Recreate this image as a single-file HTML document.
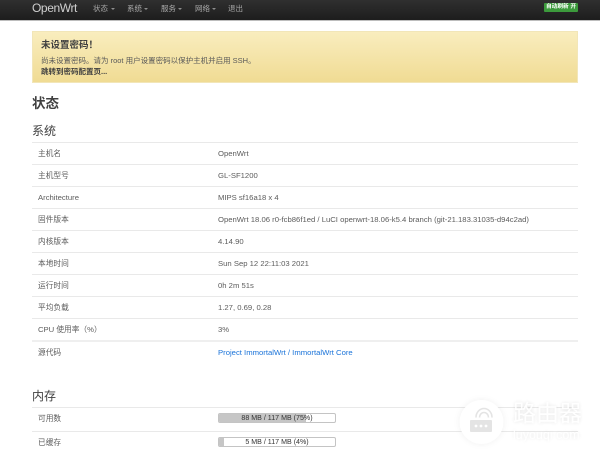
<!DOCTYPE html>
<html lang="zh-CN">
<head>
<meta charset="utf-8">
<title>OpenWrt 状态</title>
<style>
html,body{margin:0;padding:0;width:600px;height:462px;overflow:hidden;background:#fff}
body{font-family:"Liberation Sans","Noto Sans CJK SC",sans-serif;color:#404040;position:relative}
.a{position:absolute;white-space:nowrap}
#wrap{position:absolute;left:0;top:0;width:600px;height:462px;overflow:hidden;filter:blur(.35px)}
#bar{left:0;top:0;width:600px;height:20px;background:linear-gradient(#2f2f2f,#1d1d1d);border-bottom:1px solid #bdbdbd}
.nav{top:0;height:20px;line-height:17px;font-size:7.5px;color:#a9a9a9}
.car{position:absolute;top:7.5px;width:0;height:0;border-left:2.2px solid transparent;border-right:2.2px solid transparent;border-top:2.4px solid #8d8d8d}
#alert{left:32px;top:31px;width:544px;height:50px;background:linear-gradient(#f9edbe,#f0db93);border:1px solid #f2e6b8}
.line{left:32px;width:546px;height:1px;background:#e9e9e9}
.k,.v{font-size:7.7px;line-height:12px;height:12px;color:#5c5c5c}
.k{left:38px}.v{left:218px}
.pb{position:absolute;left:218px;width:116px;height:8px;border:1px solid #c4c4c4;border-radius:2px;background:#fff;overflow:hidden}
.pf{position:absolute;left:0;top:0;height:100%;background:#c6c6c6}
.pt{position:absolute;left:0;top:0;width:100%;text-align:center;font-size:7.1px;line-height:9px;color:#333}
.wm{color:#fff;opacity:.95;text-shadow:0 0 4px rgba(0,0,0,.13)}
</style>
</head>
<body>
<div id="wrap">
<div class="a" id="bar"></div>
<div class="a" style="left:32px;top:0;font-size:12px;line-height:16px;color:#cfcfcf;letter-spacing:-.4px">OpenWrt</div>

<div class="a nav" style="left:93px">状态</div><i class="car" style="left:111px"></i>
<div class="a nav" style="left:127px">系统</div><i class="car" style="left:144px"></i>
<div class="a nav" style="left:161px">服务</div><i class="car" style="left:178px"></i>
<div class="a nav" style="left:195px">网络</div><i class="car" style="left:212px"></i>
<div class="a nav" style="left:228px">退出</div>

<div class="a" style="left:544px;top:3px;width:34px;height:9px;background:#3c9a3c;border-radius:1px;color:#fff;font-size:5.7px;line-height:9px;text-align:center;font-weight:bold">自动刷新 开</div>

<div class="a" id="alert"></div>
<div class="a" style="left:41px;top:39px;font-size:9.5px;line-height:14px;font-weight:bold;color:#404040">未设置密码！</div>
<div class="a" style="left:41px;top:55px;font-size:7.5px;line-height:12px;color:#595959">尚未设置密码。请为 root 用户设置密码以保护主机并启用 SSH。</div>
<div class="a" style="left:41px;top:66px;font-size:7.5px;line-height:12px;font-weight:bold;color:#404040">跳转到密码配置页...</div>

<div class="a" style="left:32px;top:94px;font-size:13.5px;line-height:19px;font-weight:bold;color:#404040">状态</div>
<div class="a" style="left:32px;top:122px;font-size:12px;line-height:18px;color:#404040">系统</div>

<div class="a line" style="top:142px"></div>
<div class="a line" style="top:164px"></div>
<div class="a line" style="top:186px"></div>
<div class="a line" style="top:208px"></div>
<div class="a line" style="top:230px"></div>
<div class="a line" style="top:252px"></div>
<div class="a line" style="top:274px"></div>
<div class="a line" style="top:296px"></div>
<div class="a line" style="top:318px"></div>
<div class="a line" style="top:340px;height:2px;background:#efefef"></div>

<div class="a k" style="top:148px">主机名</div><div class="a v" style="top:148px">OpenWrt</div>
<div class="a k" style="top:170px">主机型号</div><div class="a v" style="top:170px">GL-SF1200</div>
<div class="a k" style="top:192px">Architecture</div><div class="a v" style="top:192px">MIPS sf16a18 x 4</div>
<div class="a k" style="top:214px">固件版本</div><div class="a v" style="top:214px">OpenWrt 18.06 r0-fcb86f1ed / LuCI openwrt-18.06-k5.4 branch (git-21.183.31035-d94c2ad)</div>
<div class="a k" style="top:236px">内核版本</div><div class="a v" style="top:236px">4.14.90</div>
<div class="a k" style="top:258px">本地时间</div><div class="a v" style="top:258px">Sun Sep 12 22:11:03 2021</div>
<div class="a k" style="top:280px">运行时间</div><div class="a v" style="top:280px">0h 2m 51s</div>
<div class="a k" style="top:302px">平均负载</div><div class="a v" style="top:302px">1.27, 0.69, 0.28</div>
<div class="a k" style="top:324px">CPU 使用率（%）</div><div class="a v" style="top:324px">3%</div>
<div class="a k" style="top:347px">源代码</div><div class="a v" style="top:347px;color:#1a73d9">Project ImmortalWrt / ImmortalWrt Core</div>

<div class="a" style="left:32px;top:387px;font-size:12px;line-height:18px;color:#404040">内存</div>
<div class="a line" style="top:407px"></div>
<div class="a line" style="top:431px"></div>

<div class="a k" style="top:413px">可用数</div>
<div class="pb" style="top:413px"><div class="pf" style="width:75%"></div><div class="pt">88 MB / 117 MB (75%)</div></div>
<div class="a k" style="top:437px">已缓存</div>
<div class="pb" style="top:437px"><div class="pf" style="width:4%"></div><div class="pt">5 MB / 117 MB (4%)</div></div>

<svg class="a" style="left:445px;top:385px;overflow:visible" width="80" height="75" viewBox="-10 -10 80 75">
<defs><filter id="s" x="-30%" y="-30%" width="160%" height="160%"><feGaussianBlur stdDeviation="3"/></filter></defs>
<circle cx="26.5" cy="27" r="22.5" fill="#000" fill-opacity=".05" filter="url(#s)"/>
<circle cx="26.5" cy="27" r="22" fill="#fff"/>
<rect x="15" y="25" width="22" height="12" rx="1" fill="#e4e4e4"/>
<circle cx="21" cy="31" r="1.4" fill="#fff"/><circle cx="26" cy="31" r="1.4" fill="#fff"/><circle cx="31" cy="31" r="1.4" fill="#fff"/>
<path d="M21 22.5A8 9 0 0 1 37 22.5M24.5 22.5A4.5 5 0 0 1 33.5 22.5" fill="none" stroke="#e4e4e4" stroke-width="1.6"/>
</svg>
<div class="a wm" style="left:513px;top:399px;font-size:23px;line-height:29px">路由器</div>
<div class="a wm" style="left:513px;top:428px;font-size:12.5px;line-height:14px">luyouqi.com</div>
</div>
</body>
</html>
